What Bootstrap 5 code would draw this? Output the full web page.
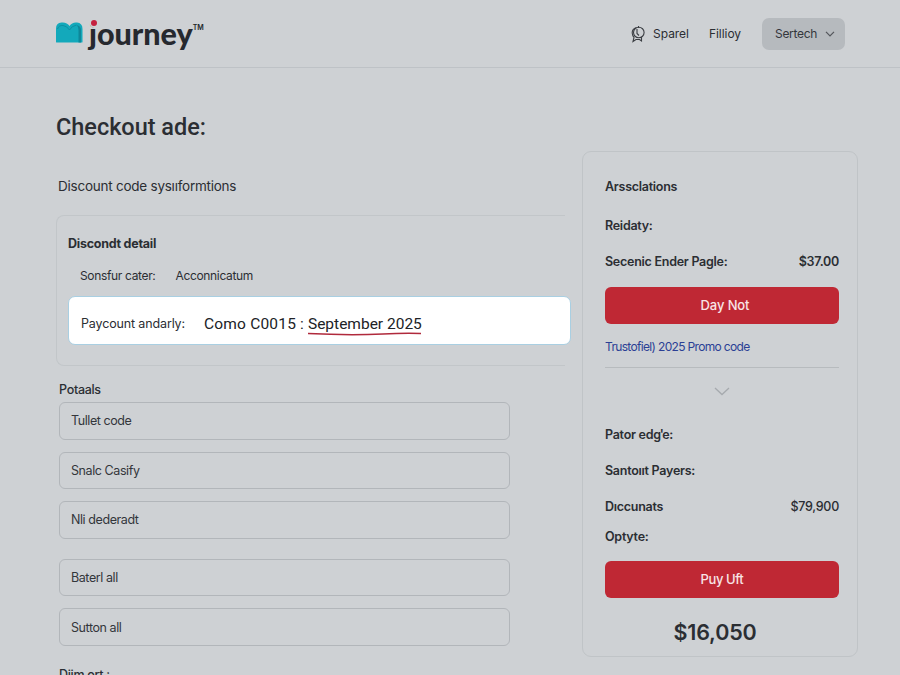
<!DOCTYPE html>
<html lang="en">
<head>
<meta charset="utf-8">
<meta name="viewport" content="width=device-width, initial-scale=1">
<title>journey – Checkout</title>
<link href="https://cdn.jsdelivr.net/npm/bootstrap@5.3.0/dist/css/bootstrap.min.css" rel="stylesheet">
<style>
  body { background: #ced1d4; color: #2b2e33; font-family: Inter, "Liberation Sans", sans-serif; font-size: 12.5px; line-height: 20px; height: 675px; overflow: hidden; }
  .topbar { height: 68px; border-bottom: 1px solid #bec2c6; padding: 0 55px 0 56px; }
  .brand { padding-bottom: 2px; }
  .brand-mark { margin: 0 6px 0 0; }
  .brand-name { font: 900 30.5px/36px Lato, sans-serif; color: #26292f; }
  .brand-dot { position: absolute; left: 2px; top: 5px; width: 6px; height: 6px; border-radius: 50%; background: #c4213f; box-shadow: 0 0 0 1.500px #ced1d4; }
  .brand-tm { font: 600 7px/10px Inter, sans-serif; margin-top: 8px; }
  .menu-link { font-size: 12px; letter-spacing: -.05px; }
  .menu-btn { width: 83px; height: 32px; background: #b6babe; border-radius: 7px; color: #34373c; font-size: 12px; letter-spacing: -.3px; padding: 0 10px 0 13px; margin-left: 21px; }
  .main-col { width: 526px; padding: 44px 0 0 56px; }
  .page-title { font: 500 23.5px/30px Roboto, sans-serif; letter-spacing: -.03px; }
  .section-title { font-size: 13.5px; letter-spacing: -.24px; margin: 34px 0 0 2px; }
  .detail-box { width: 509px; height: 151px; margin: 19px 0 0 0; border: 1px solid #c2c6c9; border-right: 0; border-radius: 8px 0 0 8px; padding: 18px 0 0 11px; }
  .detail-title { letter-spacing: -.25px; }
  .detail-row { padding-left: 12px; gap: 20px; margin-top: 12px; font-size: 12px; letter-spacing: -.34px; }
  .highlight { width: 503px; height: 49px; margin-top: 10px; background: #fff; border: 1px solid #a9cfe2; border-radius: 7px; padding: 7px 0 0 12px; gap: 19px; letter-spacing: -.14px; }
  .period { font: 400 15.5px/22px Roboto, sans-serif; letter-spacing: 0; color: #202226; }
  .code { letter-spacing: .2px; }
  .squiggle { left: 0; top: 17px; }
  .group-label { font-weight: 500; letter-spacing: -.3px; margin: 14px 0 2px 3px; }
  .group-label.next { margin-top: 19px; }
  .fields { gap: 12px; padding-left: 3px; }
  .field { width: 451px; height: 37.600px; border: 1px solid #b2b6ba; border-radius: 6px; padding: 1px 11px 0; color: #33363b; letter-spacing: -.42px; }
  .field.late { margin-top: 8px; }
  .side-col { padding-top: 83px; margin-left: 56px; }
  .summary { width: 276px; height: 506px; border: 1px solid #c0c4c7; border-radius: 9px; padding: 25px 18px 0 22px; font-weight: 600; letter-spacing: -.26px; }
  .lines-a { gap: 15.500px; margin-top: 19px; }
  .pay-btn { height: 37px; background: #bf2834; color: #f8e4e6; border-radius: 6px; font-size: 13px; font-weight: 500; letter-spacing: -.1px; }
  .pay-btn.first { padding-left: 18px; }
  .pay-btn.last { letter-spacing: -.4px; margin-top: 14px; }
  .promo { font-size: 12px; letter-spacing: -.67px; color: #2b3f94; font-weight: 400; padding-top: 5px; }
  .split { border-top: 1px solid #b7bbbe; margin-top: 10px; height: 58px; padding-top: 19px; }
  .tick { margin: 0 -1.500px 0 -1px; }
  .optional { margin-top: 10px; }
  .total { font: 600 21.500px/30px Inter, sans-serif; letter-spacing: -.2px; margin-top: 19px; padding-right: 14px; }
</style>
</head>
<body>
<header class="topbar d-flex justify-content-between align-items-center">
  <a class="brand d-flex align-items-center text-decoration-none" href="#">
    <svg class="brand-mark" width="27" height="21" viewBox="0 0 27 21"><path d="M0 20V6.500Q0 1 5.500 .5Q11 0 13.500 4Q16 0 21 .5Q26.500 1 26.500 7V20Q26.500 20.500 25.500 20.500H1Q0 20.500 0 20Z" fill="#13a9bb"/><path d="M20.500 3Q22.500 4.500 22.500 8V20.500H25V8Q25 4 20.500 3Z" fill="#0e8799"/><path d="M1.500 7Q3 3 7 3.500Q11 4 13.500 8Q15.500 4 20.500 3" fill="none" stroke="#0e8fa1" stroke-width="1"/></svg>
    <span class="brand-name position-relative">journey<i class="brand-dot"></i></span>
    <span class="brand-tm align-self-start text-dark">TM</span>
  </a>
  <nav class="d-flex align-items-center">
    <svg width="14" height="18" viewBox="0 0 14 18" fill="none" stroke="#3b3e43" stroke-width="1.100"><circle cx="7.800" cy="7.500" r="5.300"/><path d="M5.500 2.500Q1 4 1.200 8Q1.500 11 3 12.500L2 16.500L5 14.500H8.500L10.500 16V12M7.500 1V3M6 4V8.500L8 10.500"/></svg>
    <span class="menu-link ms-1 ps-1">Sparel</span>
    <span class="menu-link ms-3 ps-1">Fillioy</span>
    <button class="menu-btn btn border-0 d-flex align-items-center justify-content-between">Sertech
      <svg width="10" height="6" viewBox="0 0 10 6" fill="none" stroke="#54575c" stroke-width="1.200"><path d="M1 .8L5 5L9 .8"/></svg></button>
  </nav>
</header>
<div class="d-flex">
  <main class="main-col">
    <h1 class="page-title mb-0">Checkout ade:</h1>
    <p class="section-title mb-0">Discount code sysııformtions</p>
    <section class="detail-box">
      <div class="detail-title fw-bold">Discondt detail</div>
      <div class="detail-row d-flex"><span>Sonsfur cater:</span><span>Acconnicatum</span></div>
      <div class="highlight d-flex align-items-center"><span>Paycount andarly:</span>
        <span class="period"><span class="code">Como C0015 :</span> <span class="position-relative">September 2025<svg class="squiggle position-absolute" width="113" height="4" viewBox="0 0 113 4" fill="none" stroke="#b02a3c" stroke-width="1.500"><path d="M0 1.500Q40 3.500 75 2Q95 1 113 1.500"/></svg></span></span>
      </div>
    </section>
    <div class="group-label">Potaals</div>
    <div class="fields d-flex flex-column">
      <div class="field d-flex align-items-center">Tullet code</div>
      <div class="field d-flex align-items-center">Snalc Casify</div>
      <div class="field d-flex align-items-center">Nli dederadt</div>
      <div class="field late d-flex align-items-center">Baterl all</div>
      <div class="field d-flex align-items-center">Sutton all</div>
    </div>
    <div class="group-label next">Diim ort :</div>
  </main>
  <aside class="side-col">
    <div class="summary">
      <div>Arssclations</div>
      <div class="lines-a d-flex flex-column">
        <div>Reidaty:</div>
        <div class="d-flex justify-content-between"><span>Secenic Ender Pagle:</span><span>$37.00</span></div>
        <button class="pay-btn first btn w-100 py-0">Day Not</button>
      </div>
      <a class="promo d-block text-decoration-none mt-2" href="#">Trustofiel) 2025 Promo code</a>
      <div class="split d-flex justify-content-center"><svg width="16" height="9" viewBox="0 0 16 9" fill="none" stroke="#a6aaae" stroke-width="1.300"><path d="M1 1L8 7.500L15 1"/></svg></div>
      <div>Pator edg<span class="tick">'</span>e:</div>
      <div class="mt-3 pb-0">Santoııt Payers:</div>
      <div class="d-flex justify-content-between mt-3"><span>Dıccunats</span><span class="fw-medium">$79,900</span></div>
      <div class="optional">Optyte:</div>
      <button class="pay-btn last btn w-100 py-0">Puy Uft</button>
      <div class="total text-center">$16,050</div>
    </div>
  </aside>
</div>
<script src="https://cdn.jsdelivr.net/npm/bootstrap@5.3.0/dist/js/bootstrap.bundle.min.js"></script>
</body>
</html>
